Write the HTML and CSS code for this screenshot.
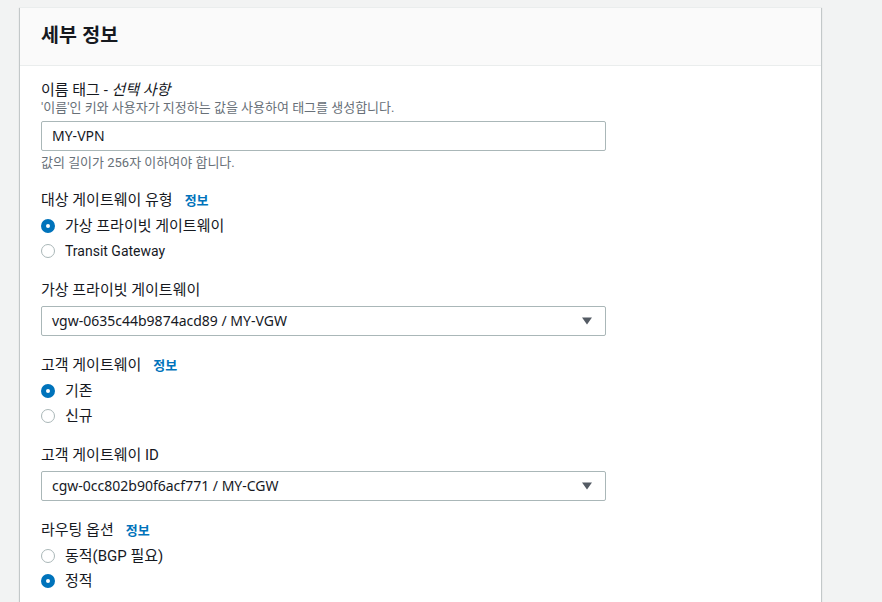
FILE: index.html
```html
<!DOCTYPE html>
<html lang="ko">
<head>
<meta charset="utf-8">
<title>세부 정보</title>
<link rel="stylesheet" href="styles.css">
</head>
<body>
<div class="page">
  <section class="card">
    <header class="card-header">
      <h2 class="card-title">세부 정보</h2>
    </header>
    <div class="card-body">
      <div class="field">
        <div class="label">이름 태그 - <i>선택 사항</i></div>
        <div class="desc">'이름'인 키와 사용자가 지정하는 값을 사용하여 태그를 생성합니다.</div>
        <div class="input">MY-VPN</div>
        <div class="constraint">값의 길이가 256자 이하여야 합니다.</div>
      </div>

      <div class="field">
        <div class="label">대상 게이트웨이 유형<a class="info">정보</a></div>
        <div class="radio-group">
          <div class="radio-row"><span class="radio checked"></span><span>가상 프라이빗 게이트웨이</span></div>
          <div class="radio-row"><span class="radio"></span><span class="en">Transit Gateway</span></div>
        </div>
      </div>

      <div class="field">
        <div class="label">가상 프라이빗 게이트웨이</div>
        <div class="select">
          <span>vgw-0635c44b9874acd89 / MY-VGW</span>
          <svg class="caret" viewBox="0 0 16 16" width="16" height="16"><path d="M3 4.5h10l-5 7z" fill="#545b64"/></svg>
        </div>
      </div>

      <div class="field">
        <div class="label">고객 게이트웨이<a class="info">정보</a></div>
        <div class="radio-group">
          <div class="radio-row"><span class="radio checked"></span><span>기존</span></div>
          <div class="radio-row"><span class="radio"></span><span>신규</span></div>
        </div>
      </div>

      <div class="field">
        <div class="label">고객 게이트웨이 ID</div>
        <div class="select">
          <span>cgw-0cc802b90f6acf771 / MY-CGW</span>
          <svg class="caret" viewBox="0 0 16 16" width="16" height="16"><path d="M3 4.5h10l-5 7z" fill="#545b64"/></svg>
        </div>
      </div>

      <div class="field">
        <div class="label">라우팅 옵션<a class="info">정보</a></div>
        <div class="radio-group">
          <div class="radio-row"><span class="radio"></span><span>동적(BGP 필요)</span></div>
          <div class="radio-row"><span class="radio checked"></span><span>정적</span></div>
        </div>
      </div>
    </div>
  </section>
</div>
</body>
</html>
```

FILE: styles.css
```css
* { box-sizing: border-box; }

html, body {
  margin: 0;
  padding: 0;
  background: #f2f3f3;
  font-family: "Roboto", "Noto Sans CJK KR", sans-serif;
  color: #16191f;
  overflow: hidden;
}

.page {
  padding: 7px 0 0 20px;
  height: 602px;
}

.card {
  width: 801px;
  height: 620px;
  background: #ffffff;
  border-top: 1px solid #eaeded;
  box-shadow: 0 1px 1px 0 rgba(0, 28, 36, 0.3), 1px 1px 1px 0 rgba(0, 28, 36, 0.15), -1px 1px 1px 0 rgba(0, 28, 36, 0.15);
}

.card-header {
  background: #fafafa;
  border-bottom: 1px solid #eaeded;
  padding: 14px 21px 19px;
}

.card-title {
  margin: 0;
  height: 24px;
  font-size: 19.5px;
  line-height: 24px;
  font-weight: 700;
  font-family: "Noto Sans CJK KR", sans-serif;
}

.card-body {
  padding: 14px 21px 0;
  display: flex;
  flex-direction: column;
  gap: 19px;
}

.field {
  display: flex;
  flex-direction: column;
}

.label {
  height: 20px;
  font-size: 15px;
  line-height: 20px;
  white-space: nowrap;
}

.label i {
  font-style: italic;
}

.info {
  margin-left: 12px;
  font-size: 13px;
  line-height: 1;
  font-weight: 700;
  color: #0073bb;
}

.desc, .constraint {
  height: 16px;
  font-size: 13px;
  line-height: 16px;
  color: #687078;
  white-space: nowrap;
}

.constraint {
  margin-top: 4px;
}

.input, .select {
  width: 565px;
  height: 30px;
  border: 1px solid #aab7b8;
  border-radius: 2px;
  font-family: "Noto Sans", "Noto Sans CJK KR", sans-serif;
  font-size: 14px;
  line-height: 28px;
  padding: 0 10px;
  background: #fff;
}

.input {
  margin-top: 5px;
}

.select {
  margin-top: 6px;
  display: flex;
  align-items: center;
  justify-content: space-between;
}

.caret {
  display: block;
}

.radio-group {
  margin-top: 6px;
  display: flex;
  flex-direction: column;
  gap: 5px;
}

.radio-row {
  display: flex;
  align-items: center;
  gap: 10px;
  height: 20px;
  font-size: 15px;
  line-height: 20px;
  white-space: nowrap;
}

.radio-row .en {
  font-size: 14px;
}

.radio {
  width: 14px;
  height: 14px;
  border-radius: 50%;
  border: 1.5px solid #aab7b8;
  background: #fff;
  flex: none;
}

.radio.checked {
  border: 5px solid #0073bb;
}
```
